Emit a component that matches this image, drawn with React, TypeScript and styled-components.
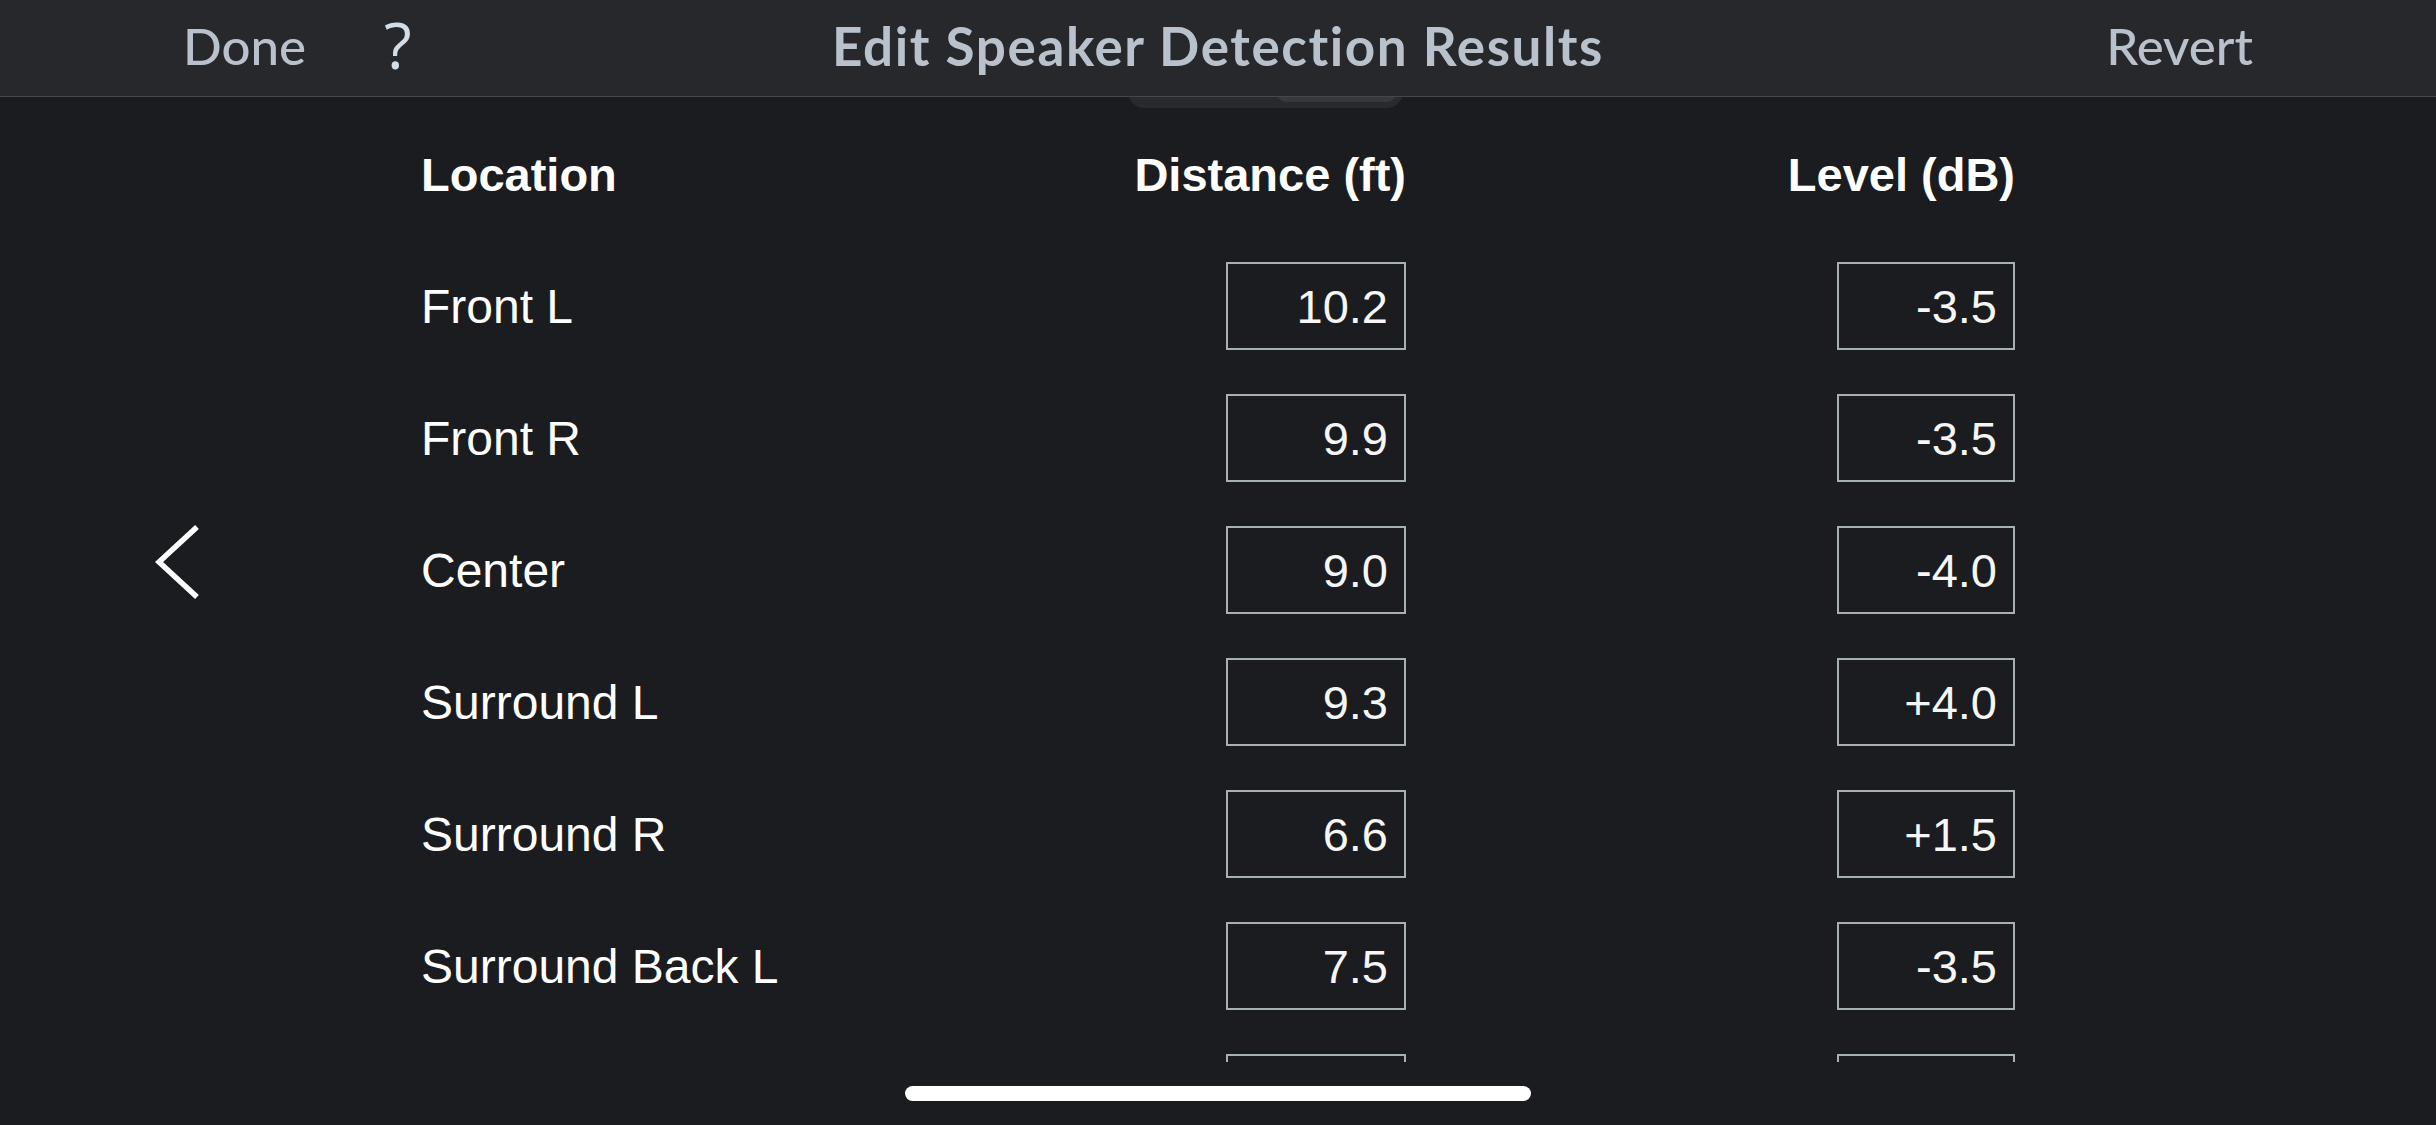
import React from "react";
import styled, { createGlobalStyle } from "styled-components";

const GlobalStyle = createGlobalStyle`
  html, body {
    margin: 0;
    padding: 0;
    background: #1b1c20;
    overflow: hidden;
  }
  * { box-sizing: border-box; }
`;

const Screen = styled.div`
  position: relative;
  width: 2436px;
  height: 1125px;
  display: flex;
  flex-direction: column;
  background: #1b1c20;
  overflow: hidden;
`;

const NavBar = styled.header`
  position: relative;
  z-index: 2;
  flex: 0 0 97px;
  display: grid;
  grid-template-columns: 1fr auto 1fr;
  align-items: center;
  padding: 0 183px 6px;
  background: #27282c;
  border-bottom: 1px solid #46474b;
  font-family: Lato, "Open Sans", sans-serif;
  font-variant-ligatures: none;
  color: #b9c2cc;
`;

const NavLeft = styled.div`
  display: flex;
  align-items: center;
  gap: 78px;
`;

const NavButton = styled.span`
  font-size: 51px;
  font-weight: 500;
  letter-spacing: 0px;
`;

const HelpMark = styled.span`
  font-family: "Open Sans", sans-serif;
  font-size: 64px;
  font-weight: 400;
  color: #d3dde8;
  line-height: 1.3;
`;

const Title = styled.h1`
  margin: 0;
  font-size: 53px;
  font-weight: 700;
  letter-spacing: 1.6px;
`;

const NavRight = styled.div`
  display: flex;
  justify-content: flex-end;
`;

const ScrollArea = styled.main`
  flex: 0 0 965px;
  overflow: hidden;
  padding-left: 421px;
`;

const Segmented = styled.div`
  display: flex;
  width: 275px;
  height: 61px;
  margin: -50px 0 0 707px;
  padding: 6px;
  border-radius: 0 0 16px 16px;
  background: #292a2e;
`;

const Segment = styled.div<{ $active?: boolean; $w?: number }>`
  flex: ${(p) => (p.$w ? `0 0 ${p.$w}px` : "1")};
  border-radius: 0 0 11px 11px;
  background: ${(p) => (p.$active ? "#38393d" : "transparent")};
`;

const Table = styled.div`
  width: 1594px;
  font-family: "Liberation Sans", Arial, sans-serif;
  color: #ffffff;
`;

const Row = styled.div`
  display: flex;
  align-items: center;
  height: 132px;
`;

const LabelCell = styled.div<{ $head?: boolean }>`
  flex: 1;
  font-size: ${(p) => (p.$head ? "47px" : "48px")};
  font-weight: ${(p) => (p.$head ? 700 : 400)};
  white-space: nowrap;
`;

const ValueCell = styled.div<{ $w: number; $head?: boolean }>`
  flex: 0 0 ${(p) => p.$w}px;
  display: flex;
  justify-content: flex-end;
  font-size: 47px;
  font-weight: ${(p) => (p.$head ? 700 : 400)};
  white-space: nowrap;
`;

const ValueBox = styled.div<{ $w: number }>`
  width: ${(p) => p.$w}px;
  height: 88px;
  display: flex;
  align-items: center;
  justify-content: flex-end;
  padding-right: 16px;
  border: 2px solid #a7afb7;
  font-size: 47px;
  color: #f6f6f6;
`;

const Footer = styled.footer`
  flex: 1;
  display: flex;
  justify-content: center;
  padding-top: 24px;
`;

const HomeIndicator = styled.div`
  width: 626px;
  height: 15px;
  border-radius: 8px;
  background: #ffffff;
`;

const BackButton = styled.button`
  position: absolute;
  left: 155px;
  top: 522px;
  width: 46px;
  height: 80px;
  padding: 0;
  border: 0;
  background: transparent;
  cursor: pointer;
`;

const rows = [
  { loc: "Front L", dist: "10.2", lvl: "-3.5" },
  { loc: "Front R", dist: "9.9", lvl: "-3.5" },
  { loc: "Center", dist: "9.0", lvl: "-4.0" },
  { loc: "Surround L", dist: "9.3", lvl: "+4.0" },
  { loc: "Surround R", dist: "6.6", lvl: "+1.5" },
  { loc: "Surround Back L", dist: "7.5", lvl: "-3.5" },
  // next row is scrolled mostly out of view: only its box tops show
  { loc: "", dist: "", lvl: "" },
];

export default function App() {
  return (
    <>
      <GlobalStyle />
      <Screen>
        <NavBar>
          <NavLeft>
            <NavButton>Done</NavButton>
            <HelpMark>?</HelpMark>
          </NavLeft>
          <Title>Edit Speaker Detection Results</Title>
          <NavRight>
            <NavButton>Revert</NavButton>
          </NavRight>
        </NavBar>
        <ScrollArea>
          <Segmented>
            <Segment />
            <Segment $active $w={121} />
          </Segmented>
          <Table>
            <Row>
              <LabelCell $head>Location</LabelCell>
              <ValueCell $w={400} $head>Distance (ft)</ValueCell>
              <ValueCell $w={609} $head>Level (dB)</ValueCell>
            </Row>
            {rows.map((r, i) => (
              <Row key={i}>
                <LabelCell>{r.loc}</LabelCell>
                <ValueCell $w={400}>
                  <ValueBox $w={180}>{r.dist}</ValueBox>
                </ValueCell>
                <ValueCell $w={609}>
                  <ValueBox $w={178}>{r.lvl}</ValueBox>
                </ValueCell>
              </Row>
            ))}
          </Table>
        </ScrollArea>
        <Footer>
          <HomeIndicator />
        </Footer>
        <BackButton aria-label="Back">
          <svg width="46" height="80" viewBox="0 0 46 80">
            <polyline
              points="42,5 4,40 42,75"
              fill="none"
              stroke="#ffffff"
              strokeWidth="5.5"
              strokeLinecap="butt"
              strokeLinejoin="miter"
            />
          </svg>
        </BackButton>
      </Screen>
    </>
  );
}
